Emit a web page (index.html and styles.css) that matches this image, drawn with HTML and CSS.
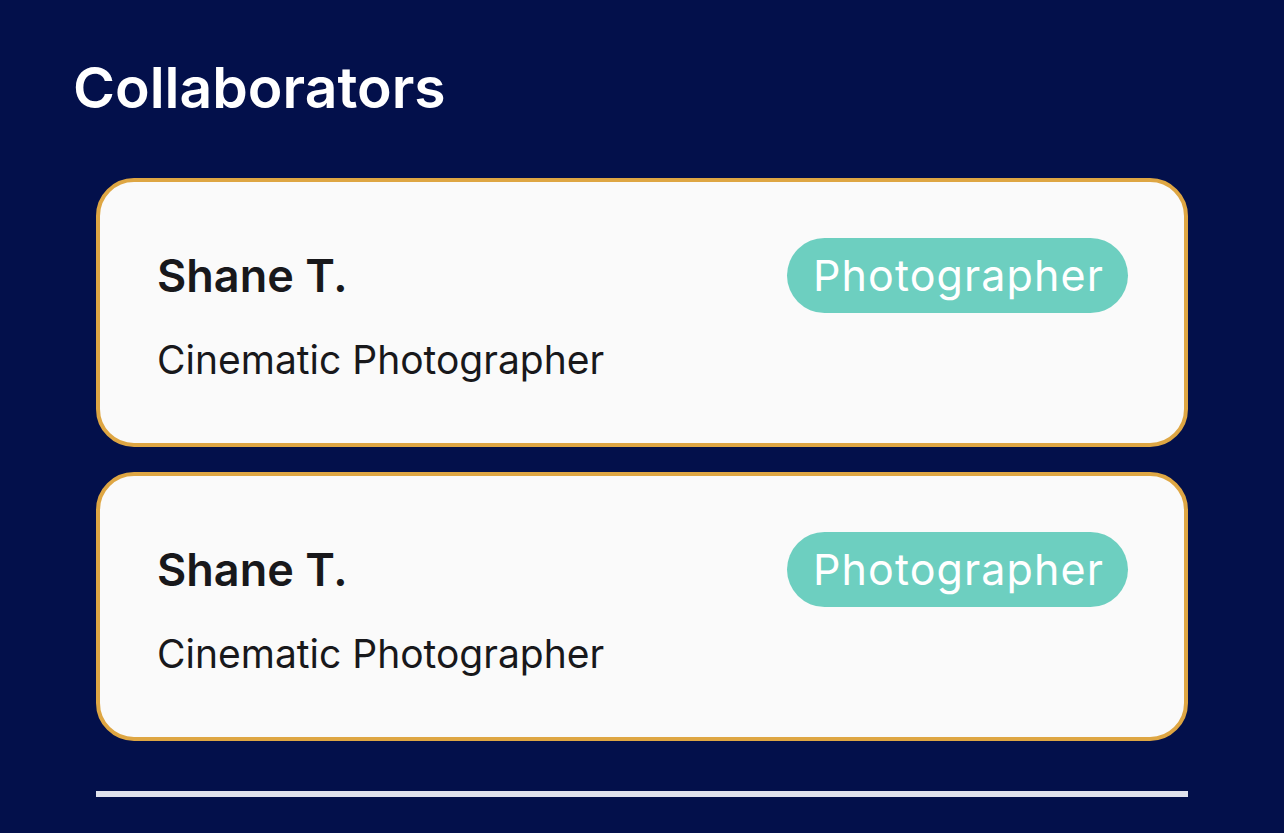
FILE: index.html
```html
<!DOCTYPE html>
<html>
<head>
<meta charset="utf-8">
<link rel="stylesheet" href="styles.css">
</head>
<body>
<div class="page">
  <h1 class="title">Collaborators</h1>
  <div class="list">
    <div class="card">
      <div class="card-head">
        <span class="name">Shane T.</span>
        <span class="badge">Photographer</span>
      </div>
      <div class="role">Cinematic Photographer</div>
    </div>
    <div class="card">
      <div class="card-head">
        <span class="name">Shane T.</span>
        <span class="badge">Photographer</span>
      </div>
      <div class="role">Cinematic Photographer</div>
    </div>
  </div>
  <div class="divider"></div>
</div>
</body>
</html>
```
FILE: styles.css
```css
html, body {
  margin: 0;
  padding: 0;
  background: #03104b;
  font-family: Inter, "Noto Sans", sans-serif;
}
.page {
  width: 1284px;
  height: 833px;
  overflow: hidden;
}
.title {
  margin: 0;
  padding: 52px 0 0 73px;
  font-size: 57px;
  font-weight: 600;
  line-height: 72px;
  color: #ffffff;
}
.list {
  margin: 54px 96px 0 96px;
  display: flex;
  flex-direction: column;
  gap: 25px;
}
.card {
  background: #fafafa;
  border: 4px solid #dea643;
  border-radius: 38px;
  padding: 56px 56px 60px 57px;
}
.card-head {
  display: flex;
  justify-content: space-between;
  align-items: center;
  height: 75px;
}
.name {
  font-size: 45px;
  font-weight: 600;
  color: #18181b;
}
.badge {
  background: #6dcfc0;
  color: #ffffff;
  font-size: 43px;
  font-weight: 400;
  letter-spacing: 1.1px;
  height: 75px;
  line-height: 75px;
  padding: 0 24px 0 26px;
  border-radius: 38px;
}
.role {
  margin-top: 23px;
  font-size: 39px;
  color: #18181b;
}
.divider {
  margin: 50px 96px 0 96px;
  height: 6px;
  background: #e0e2ec;
}
```
